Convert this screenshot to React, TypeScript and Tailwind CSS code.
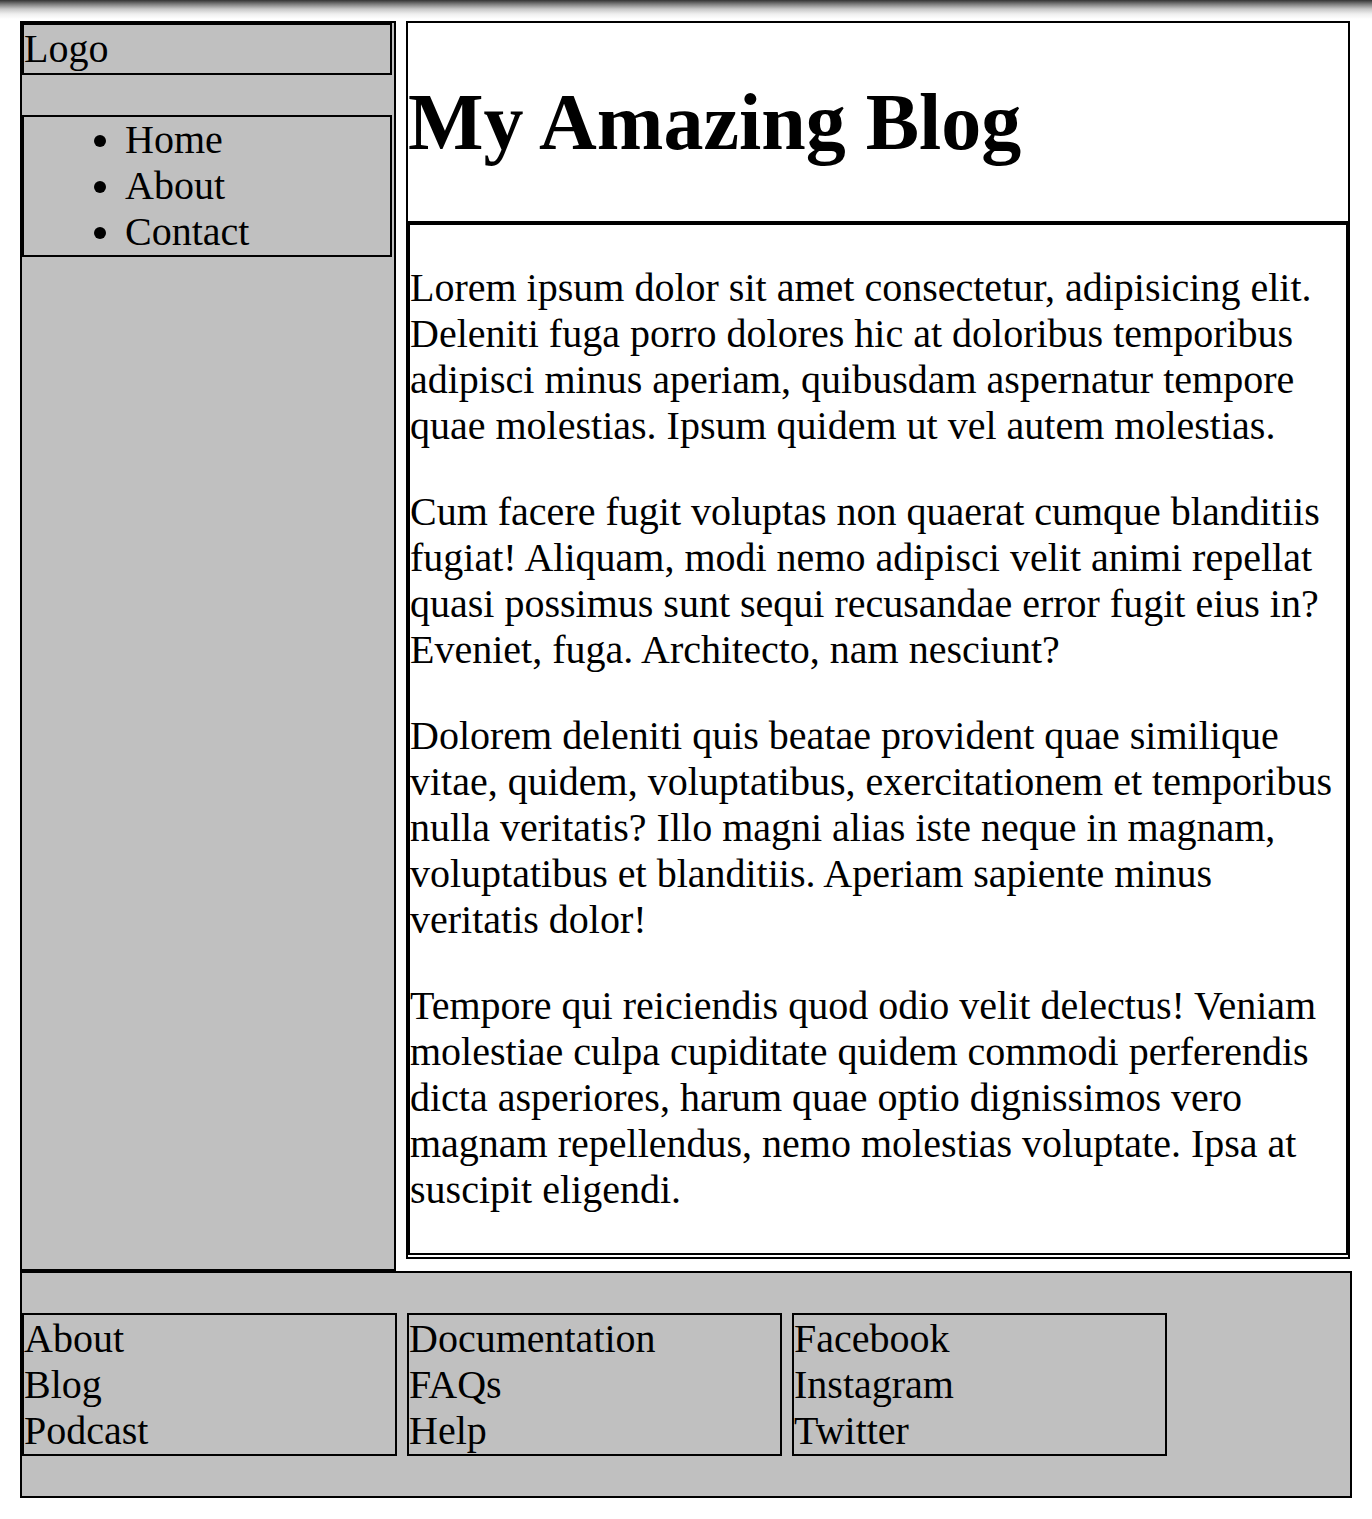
import React from "react";

const navLinks = ["Home", "About", "Contact"];

const paragraphs = [
  "Lorem ipsum dolor sit amet consectetur, adipisicing elit. Deleniti fuga porro dolores hic at doloribus temporibus adipisci minus aperiam, quibusdam aspernatur tempore quae molestias. Ipsum quidem ut vel autem molestias.",
  "Cum facere fugit voluptas non quaerat cumque blanditiis fugiat! Aliquam, modi nemo adipisci velit animi repellat quasi possimus sunt sequi recusandae error fugit eius in? Eveniet, fuga. Architecto, nam nesciunt?",
  "Dolorem deleniti quis beatae provident quae similique vitae, quidem, voluptatibus, exercitationem et temporibus nulla veritatis? Illo magni alias iste neque in magnam, voluptatibus et blanditiis. Aperiam sapiente minus veritatis dolor!",
  "Tempore qui reiciendis quod odio velit delectus! Veniam molestiae culpa cupiditate quidem commodi perferendis dicta asperiores, harum quae optio dignissimos vero magnam repellendus, nemo molestias voluptate. Ipsa at suscipit eligendi.",
];

const footerGroups = [
  ["About", "Blog", "Podcast"],
  ["Documentation", "FAQs", "Help"],
  ["Facebook", "Instagram", "Twitter"],
];

function App() {
  return (
    <div className="min-h-[1519px] bg-white text-[40px] leading-[46px] text-black [font-family:'Liberation_Serif','Times_New_Roman',serif]">
      {/* toolbar shadow */}
      <div className="h-[21px] bg-[linear-gradient(to_bottom,#333333_0px,#7a7a7a_4px,#c8c8c8_9px,#efefef_14px,#ffffff_19px)]" />

      <div className="pl-[20px] pr-[20px]">
        <div className="flex items-stretch">
          <aside className="w-[376px] shrink-0 border-2 border-black bg-[#c0c0c0]">
            <div className="mr-[2px] h-[52px] border-2 border-black leading-[48px]">
              Logo
            </div>
            <nav className="mt-[40px] mr-[2px] border-2 border-black">
              <ul className="list-disc pl-[101px]">
                {navLinks.map((link) => (
                  <li key={link}>{link}</li>
                ))}
              </ul>
            </nav>
          </aside>

          <main className="ml-[10px] mr-[2px] mb-[12px] flex-1 border-2 border-black pb-[2px]">
            <header className="border-b-2 border-black">
              <h1 className="my-[53px] text-[80px] leading-[92px] font-bold">
                My Amazing Blog
              </h1>
            </header>
            <article className="border-2 border-black pb-[40px]">
              {paragraphs.map((text, i) => (
                <p key={i} className="mt-[40px]">
                  {text}
                </p>
              ))}
            </article>
          </main>
        </div>

        <footer className="flex gap-[10px] border-2 border-black bg-[#c0c0c0] py-[40px]">
          {footerGroups.map((group, i) => (
            <ul
              key={i}
              className="flex h-[143px] w-[375px] flex-col justify-center border-2 border-black"
            >
              {group.map((item) => (
                <li key={item}>{item}</li>
              ))}
            </ul>
          ))}
        </footer>
      </div>
    </div>
  );
}

export default App;
